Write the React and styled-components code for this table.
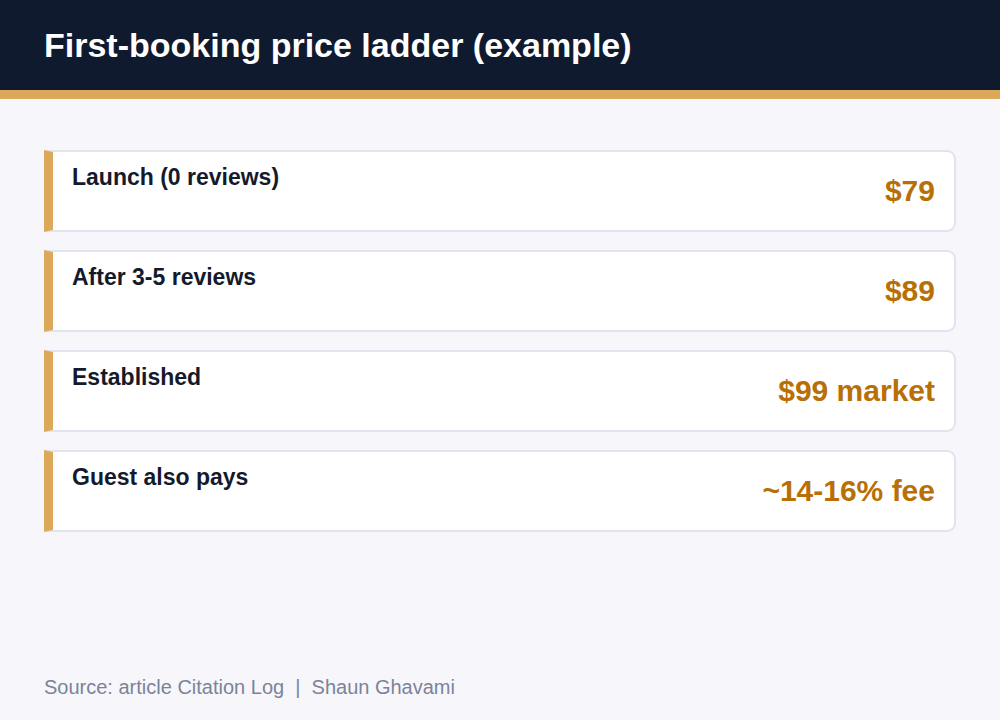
import styled, { createGlobalStyle } from "styled-components";

const GlobalStyle = createGlobalStyle`
  html, body {
    margin: 0;
    padding: 0;
    background: #f6f6fb;
  }
  body {
    font-family: "Liberation Sans", Arial, sans-serif;
  }
`;

const Page = styled.div`
  width: 1000px;
  height: 720px;
  display: flex;
  flex-direction: column;
  background: #f6f6fb;
`;

const Header = styled.header`
  height: 90px;
  background: #101a2f;
  border-bottom: 9px solid #dca85a;
  display: flex;
  align-items: center;
  padding: 0 44px;
  box-sizing: content-box;
`;

const Title = styled.h1`
  margin: 0;
  color: #ffffff;
  font-size: 34px;
  font-weight: 700;
`;

const List = styled.div`
  display: flex;
  flex-direction: column;
  gap: 18px;
  padding: 51px 44px 0;
  flex: 1;
`;

const Card = styled.div`
  height: 82px;
  box-sizing: border-box;
  display: flex;
  justify-content: space-between;
  align-items: center;
  background: #ffffff;
  border: 2px solid #e1e4ee;
  border-left: 9px solid #dca85a;
  border-radius: 0 9px 9px 0;
  padding: 0 19px;
`;

const Label = styled.div`
  align-self: flex-start;
  margin-top: 12px;
  color: #141a2b;
  font-size: 23px;
  font-weight: 700;
`;

const Value = styled.div`
  color: #b86f05;
  font-size: 30px;
  font-weight: 700;
`;

const Footer = styled.footer`
  padding: 0 44px 21px;
  color: #7b8399;
  font-size: 20px;
`;

const rows = [
  { label: "Launch (0 reviews)", value: "$79" },
  { label: "After 3-5 reviews", value: "$89" },
  { label: "Established", value: "$99 market" },
  { label: "Guest also pays", value: "~14-16% fee" },
];

export default function App() {
  return (
    <>
      <GlobalStyle />
      <Page>
        <Header>
          <Title>First-booking price ladder (example)</Title>
        </Header>
        <List>
          {rows.map((row) => (
            <Card key={row.label}>
              <Label>{row.label}</Label>
              <Value>{row.value}</Value>
            </Card>
          ))}
        </List>
        <Footer>Source: article Citation Log &nbsp;|&nbsp; Shaun Ghavami</Footer>
      </Page>
    </>
  );
}
